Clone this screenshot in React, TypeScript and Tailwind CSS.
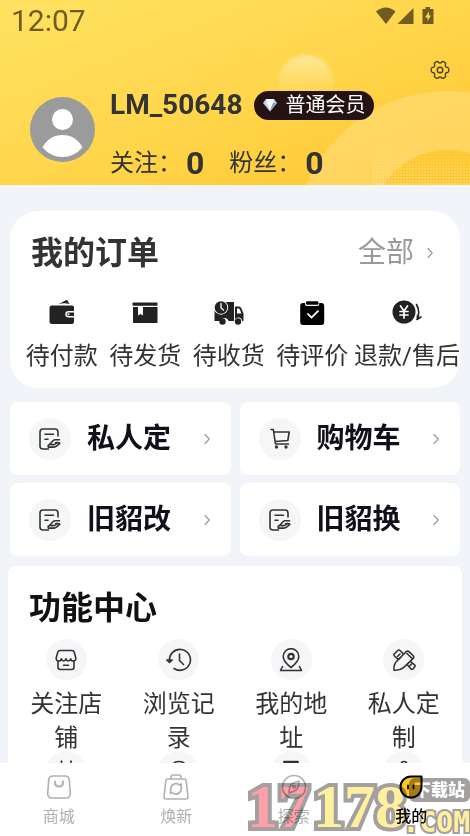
import type { ReactNode } from 'react'

type Item = { label: string; icon: ReactNode }

const stroke = {
  fill: 'none',
  stroke: 'currentColor',
  strokeWidth: 1.6,
  strokeLinecap: 'round' as const,
  strokeLinejoin: 'round' as const,
}

function Chevron() {
  return (
    <svg width="8" height="12" viewBox="0 0 8 12" {...stroke} strokeWidth={1.2}>
      <path d="M2 1.500 6.200 6 2 10.500" />
    </svg>
  )
}

function WalletIcon() {
  return (
    <svg width="28" height="28" viewBox="0 0 28 28" fill="#222">
      <path d="M10 5.500 17.800 1.300q1.200-.6 2 .6l1.700 3.100q-6-1.500-11.500.5z" />
      <path
        fillRule="evenodd"
        d="M4 6.500h20q2 0 2 2V12h-5.500a3 3 0 0 0 0 6.500H26V23q0 2-2 2H4q-2.500 0-2.500-2V8.500q0-2 2.500-2z"
      />
      <path d="M20.500 13.500H26V17h-5.500a1.700 1.700 0 0 1 0-3.500z" />
      <circle cx="20.500" cy="15.200" r="1" fill="#fff" />
    </svg>
  )
}

function BoxIcon() {
  return (
    <svg width="28" height="28" viewBox="0 0 28 28" fill="#222">
      <rect x="1.500" y="3.500" width="25" height="3.200" rx=".6" />
      <path d="M2 8h5v8.500l2.500-1.500 2.500 1.500V8h14.500v16H2z" />
    </svg>
  )
}

function TruckIcon() {
  return (
    <svg width="30" height="28" viewBox="0 0 30 28" fill="#222">
      <path d="M8 3h12v19h-5.500a4.200 4.200 0 0 0-8 0H.5V12z" />
      <path
        fillRule="evenodd"
        d="M21 7.500h4q1.500 0 2.200 1.500l2.300 5.500V22h-1.200a4 4 0 0 0-7.300-1.800zm2 2v5h4.500l-1.800-4.200q-.3-.8-1-.8z"
      />
      <circle cx="7" cy="8.500" r="7.200" fill="#fff" />
      <circle cx="7" cy="8.500" r="6.300" />
      <path d="M7 4.500V9l2.500 2" {...stroke} stroke="#fff" strokeWidth="1.300" />
      <circle cx="8.500" cy="22.500" r="3.200" />
      <circle cx="24" cy="22.500" r="3.200" />
    </svg>
  )
}

function ReviewIcon() {
  return (
    <svg width="28" height="28" viewBox="0 0 28 28">
      <path d="M7 4H5q-2.800 0-2.800 3v16q0 3 3 3h18q3 0 3-3V7q0-3-3-3h-2v1q0 2-2 2H9Q7 7 7 5z" />
      <rect x="8" y="2.300" width="12.500" height="3.500" rx="1.200" />
      <path d="m10 15 3.500 3.700 6.500-6.500" {...stroke} stroke="#fff" strokeWidth="1.800" />
    </svg>
  )
}

function RefundIcon() {
  return (
    <svg width="30" height="28" viewBox="0 0 30 28" fill="#222">
      <circle cx="12" cy="13" r="11.500" />
      <path d="m8.500 7 3.500 5 3.500-5M8 12.500h8M8 16h8M12 12.500V19" {...stroke} stroke="#fff" strokeWidth="1.700" />
      <path d="M24.500 5.500q3.800 6.500 1 14.500M25 20.500l4-2.500M25.200 20.500l.3-4" {...stroke} stroke="#222" />
    </svg>
  )
}

function DocHandIcon() {
  return (
    <svg width="22" height="22" viewBox="0 0 22 22" {...stroke}>
      <path d="M19 8V4q0-3-3-3H4Q1 1 1 4v14q0 3 3 3h5.500" />
      <path d="M6 6.200h8.500M6 11.200h3" />
      <path d="M20.500 11.800h-4.200q-1.300 0-2.300 1l-2.300 2.500q-.8 1.200.6 1.300h2.400q1.300 0 2-.8l1.500-1.400" />
      <path d="M20.800 15.500l-3.300 2.700q-1.200.9-2.500.9H9.200v-1.600l2-1.500M16.500 14.800h4" />
    </svg>
  )
}

function CartIcon() {
  return (
    <svg width="22" height="22" viewBox="0 0 22 22" {...stroke}>
      <path d="M2 1.500h2.300L6.500 16h13M5.500 4h14.700L18.800 12.500 6.200 13.500" />
      <circle cx="7.500" cy="19" r=".9" />
      <circle cx="17" cy="19" r=".9" />
    </svg>
  )
}

function ShopIcon() {
  return (
    <svg width="24" height="24" viewBox="0 0 24 24" {...stroke}>
      <path d="M6 2.500h12q1.800 0 2.200 1.600L21.800 10q.2 3-2.400 3-2.400 0-2.700-2.200-.7 2.200-2.400 2.200T12 10.800Q11.400 13 9.700 13t-2.400-2.200Q7 13 4.600 13 2 13 2.200 10l1.600-5.900Q4.200 2.500 6 2.500z" />
      <path d="M4 13.500V19q0 2.500 2.500 2.500h11q2.500 0 2.500-2.500v-5.500M9.500 17.300h5" />
    </svg>
  )
}

function HistoryIcon() {
  return (
    <svg width="26" height="24" viewBox="0 0 26 24" {...stroke}>
      <path d="M3.500 13A10.500 10.500 0 1 1 8 20.500M.8 12l2.700 2.500L6.200 12zM13.500 6v6.500l4 4" />
    </svg>
  )
}

function PinIcon() {
  return (
    <svg width="24" height="24" viewBox="0 0 24 24" {...stroke}>
      <path d="M12 19.500Q4.200 13.500 4.200 8.500a7.800 7.800 0 0 1 15.600 0Q19.800 13.500 12 19.500zM3.500 18.500l-2 4h21l-2-4" />
      <circle cx="12" cy="8.500" r="2.700" strokeWidth="2.200" />
    </svg>
  )
}

function DesignIcon() {
  return (
    <svg width="24" height="24" viewBox="0 0 24 24" {...stroke}>
      <path d="M2 22.200q-.5-5.700 2.500-8.700L14 3.800q1.600-1.500 3.200 0l3.800 3.700q1.500 1.600 0 3.200L11.500 19.700q-3.500 3-9.500 2.500zM15 5.500l4.500 4.500" />
      <path d="M8.500 9.500 6.200 11.500 2.500 8q-1-1 0-2.200L5.700 2.500q1.200-1 2.300 0L11.500 6M5.500 8.500 8 6M15.500 17l3.500 4q1 .9 2-.1l1.700-2.100q.8-1-.1-1.900L18.500 13.500M17.500 18l2.500-2.500" />
    </svg>
  )
}

function Gear() {
  return (
    <svg width="20" height="20" viewBox="0 0 20 20" {...stroke} strokeWidth={1.400}>
      <path d="M6.500 1.700q1.100-.5 1.900.5.700.8 1.600.8t1.600-.8q.8-1 1.900-.5l1.500.9q1 .8.500 2-.5 1 .1 1.900.6.800 1.700.9 1.300.2 1.400 1.500v2.100q-.1 1.300-1.400 1.500-1.100.1-1.700.9-.6.900-.1 1.900.5 1.200-.5 2l-1.500.9q-1.100.5-1.900-.5-.7-.8-1.600-.8t-1.600.8q-.8 1-1.900.5L5 17.300q-1-.8-.5-2 .5-1-.1-1.900-.6-.8-1.700-.9-1.300-.2-1.400-1.500V8.900q.1-1.300 1.400-1.500 1.100-.1 1.700-.9.600-.9.100-1.900-.5-1.200.5-2z" />
      <circle cx="10" cy="10" r="2.800" />
    </svg>
  )
}

const orders: Item[] = [
  { label: '待付款', icon: <WalletIcon /> },
  { label: '待发货', icon: <BoxIcon /> },
  { label: '待收货', icon: <TruckIcon /> },
  { label: '待评价', icon: <ReviewIcon /> },
  { label: '退款/售后', icon: <RefundIcon /> },
]

const shortcuts: Item[] = [
  { label: '私人定', icon: <DocHandIcon /> },
  { label: '购物车', icon: <CartIcon /> },
  { label: '旧貂改', icon: <DocHandIcon /> },
  { label: '旧貂换', icon: <DocHandIcon /> },
]

const features: Item[] = [
  { label: '关注店铺', icon: <ShopIcon /> },
  { label: '浏览记录', icon: <HistoryIcon /> },
  { label: '我的地址', icon: <PinIcon /> },
  { label: '私人定制', icon: <DesignIcon /> },
]

const moreFeatures: ReactNode[] = [
  <path d="M7.500 1v3M17 1v3M4 5h16v15H4z" />,
  <path d="M4 9Q5 1.500 12 1.500T20 9v4M4 9v4" />,
  <path d="M5 1.500h14v19H5zM5 2.500h14" />,
  <path d="M9 4.500a3 3 0 1 1 6 0 3 3 0 0 1-6 0zM5 20q0-8 7-8t7 8" />,
]

const tabs: (Item & { active?: boolean })[] = [
  {
    label: '商城',
    icon: (
      <svg width="28" height="28" viewBox="0 0 28 28" {...stroke}>
        <path d="M8 3h12q4 0 4.300 4l1 13q.2 5-4 5H6.700q-4.200 0-4-5l1-13Q4 3 8 3z" />
        <path d="M10 8.500v1q0 4 4 4t4-4v-1" strokeWidth="2" />
      </svg>
    ),
  },
  {
    label: '焕新',
    icon: (
      <svg width="28" height="28" viewBox="0 0 28 28" {...stroke}>
        <path d="M5.500 6h17q1.500 0 1.600 1.500L26 24q.1 2-2 2H4q-2.100 0-2-2L3.900 7.500Q4 6 5.500 6zM8.500 6l.8-3q.3-1 1.300-1h6.800q1 0 1.300 1l.8 3" />
        <path d="M8.700 18v-2.500a5.400 5.400 0 0 1 9-3.500M19.300 14v2a5.400 5.400 0 0 1-9 3.700M8.700 20.500V17M19.300 11v3.500" strokeWidth="1.800" />
      </svg>
    ),
  },
  {
    label: '探索',
    icon: (
      <svg width="28" height="28" viewBox="0 0 28 28" {...stroke}>
        <circle cx="14" cy="14" r="11.500" />
        <path d="M19 8q0 7-3.500 9.500L9 20q0-7 3.200-9.500z" />
        <circle cx="14" cy="14" r="1.300" />
      </svg>
    ),
  },
  {
    label: '我的',
    active: true,
    icon: (
      <svg width="28" height="28" viewBox="0 0 28 28" {...stroke}>
        <path d="M14 3.500h10.500V14A10.500 10.500 0 1 1 14 3.500z" fill="#ffc629" strokeWidth="2" />
        <path d="M11 12.500v3M16.500 12.500v3" strokeWidth="1.800" />
      </svg>
    ),
  },
]

function HeaderDecor() {
  return (
    <svg className="absolute right-0 bottom-0" width="220" height="185" viewBox="0 0 220 185">
      <defs>
        <linearGradient id="bubble" x1="0" y1="0" x2="0" y2="1">
          <stop offset="0" stopColor="#fff" stopOpacity=".42" />
          <stop offset=".75" stopColor="#fff" stopOpacity="0" />
        </linearGradient>
        <linearGradient id="fade" x1="0" y1="0" x2="0" y2="1">
          <stop offset="0" stopColor="#fff" stopOpacity="0" />
          <stop offset="1" stopColor="#fff" stopOpacity="1" />
        </linearGradient>
        <pattern id="dots" width="3" height="3" patternUnits="userSpaceOnUse">
          <rect width="2" height="2" fill="#ffe28a" fillOpacity=".6" />
        </pattern>
        <mask id="dotMask">
          <rect x="122" y="138" width="98" height="47" fill="url(#fade)" />
        </mask>
        <filter id="soft">
          <feGaussianBlur stdDeviation="1.500" />
        </filter>
      </defs>
      <circle cx="56" cy="83" r="28" fill="url(#bubble)" filter="url(#soft)" />
      <circle cx="198" cy="245" r="154" fill="#ffdf88" fillOpacity=".5" />
      <circle cx="198" cy="228" r="78" fill="#ffc830" />
      <rect x="122" y="138" width="98" height="47" fill="url(#dots)" mask="url(#dotMask)" />
    </svg>
  )
}

function StatusBar() {
  return (
    <div className="flex h-[42px] items-center justify-between pr-9 pl-[11px] text-[#6f5c20]">
      <span className="text-[30px] leading-[42px]">12:07</span>
      <svg width="58" height="18" viewBox="0 0 58 18" className="mb-[11px]" fill="currentColor">
        <path d="M0 4.500q10-8 19.500 0L10 17z" />
        <path d="M21.500 17 37.500 1v16z" />
        <path
          fillRule="evenodd"
          d="M49.500 0h4.500v2h3.500v15h-11V2h3zM53 4.500l-4 6h2.500V14l3.500-5.500h-2z"
        />
      </svg>
    </div>
  )
}

function Header() {
  return (
    <header className="relative shrink-0 overflow-hidden bg-linear-to-br from-[#ffe262] via-[#ffd64c] to-[#ffc62c] pb-1">
      <HeaderDecor />
      <div className="relative">
        <StatusBar />
        <div className="flex justify-end pt-[18px] pr-5">
          <button aria-label="设置" className="text-[#4a4224]">
            <Gear />
          </button>
        </div>
        <div className="mt-[10px] flex items-start pl-[30px]">
          <svg width="65" height="65" viewBox="0 0 65 65" className="mt-[7px] shrink-0">
            <circle cx="32.500" cy="32.500" r="32.500" fill="#9b9b9b" />
            <circle cx="32.500" cy="22.500" r="10.500" fill="#fff" />
            <path d="M12.500 50.500Q19 38 32.500 38t20 12.500Q44 60 32.500 60t-20-9.500z" fill="#fff" />
          </svg>
          <div className="ml-[15px] text-[#333]">
            <div className="flex h-[30px] items-center gap-3">
              <h1 className="text-[28px] leading-8 font-bold">LM_50648</h1>
              <span className="flex h-[29px] items-center gap-2 rounded-full bg-[#251313] px-[9px] text-[20px] leading-[29px] text-white">
                <svg width="14" height="14" viewBox="0 0 14 14">
                  <path d="M3 1h8l3 4-7 8.500L0 5z" fill="#c3d3e6" />
                  <path d="M3 1h8l-1 4H4z" fill="#f4f9ff" />
                  <path d="M4 5h6l-3 7z" fill="#fff" />
                  <path d="M10 5h4l-7 8.500z" fill="#8ea3bf" />
                </svg>
                普通会员
              </span>
            </div>
            <div className="mt-[25px] flex h-9 items-center text-[24px] leading-9">
              <span>关注：</span>
              <b className="ml-1 text-[32px]">0</b>
              <span className="ml-[25px]">粉丝：</span>
              <b className="ml-1 text-[32px]">0</b>
            </div>
          </div>
        </div>
      </div>
    </header>
  )
}

function Orders() {
  return (
    <section className="mx-[10px] mt-[26px] rounded-[28px] bg-white pt-[18px] pb-[14px] text-[#333]">
      <div className="flex h-12 items-center justify-between pr-[26px] pl-[21px]">
        <h2 className="text-[32px] leading-[48px] font-bold">我的订单</h2>
        <a href="#orders" className="flex items-center gap-3 text-[28px] leading-[42px] text-[#999]">
          全部
          <Chevron />
        </a>
      </div>
      <div className="mt-[22px] grid grid-cols-[repeat(4,1fr)_auto] pl-[10px]">
        {orders.map((o) => (
          <button key={o.label} className="flex flex-col items-center gap-[11px]">
            {o.icon}
            <span className="text-[24px] leading-9 whitespace-nowrap">{o.label}</span>
          </button>
        ))}
      </div>
    </section>
  )
}

function Shortcuts() {
  return (
    <div className="mx-[10px] mt-[14px] grid grid-cols-2 gap-x-[9px] gap-y-2">
      {shortcuts.map((s) => (
        <button key={s.label} className="flex h-[73px] items-center rounded-lg bg-white pr-5 pl-[19px]">
          <span className="flex size-[42px] shrink-0 items-center justify-center rounded-full bg-[#f5f6f8] text-[#333]">
            {s.icon}
          </span>
          <span className="ml-4 text-[28px] leading-[42px] font-bold text-[#10101a]">{s.label}</span>
          <span className="ml-auto text-[#999]">
            <Chevron />
          </span>
        </button>
      ))}
    </div>
  )
}

function Features() {
  return (
    <section className="mx-2 mt-[10px] rounded-lg bg-white px-[2px] pt-[18px] text-[#333]">
      <h2 className="pl-[19px] text-[32px] leading-[48px] font-bold text-[#111]">功能中心</h2>
      <div className="mt-[7px] grid grid-cols-4">
        {features.map((f) => (
          <button key={f.label} className="flex h-28 flex-col items-center px-3">
            <span className="flex size-[41px] shrink-0 items-center justify-center rounded-full bg-[#f5f6f8]">
              {f.icon}
            </span>
            <span className="mt-[7px] text-[24px] leading-[34px]">{f.label}</span>
          </button>
        ))}
        {moreFeatures.map((shape, i) => (
          <div key={i} className="flex justify-center">
            <span className="flex size-[41px] items-center justify-center rounded-full bg-[#f5f6f8]">
              <svg width="24" height="24" viewBox="0 0 24 24" {...stroke}>
                {shape}
              </svg>
            </span>
          </div>
        ))}
      </div>
    </section>
  )
}

function TabBar() {
  return (
    <nav className="relative grid h-[73px] shrink-0 grid-cols-4 bg-white">
      {tabs.map((t) => (
        <a
          key={t.label}
          href="#tab"
          className={
            t.active
              ? 'flex flex-col items-center pt-[10px] font-medium text-black'
              : 'flex flex-col items-center pt-[10px] text-[#b0b0b0]'
          }
        >
          {t.icon}
          <span className="mt-1 text-[16px] leading-6">{t.label}</span>
        </a>
      ))}
      <Stamp />
    </nav>
  )
}

// site mark laid over the right half of the tab bar
function Stamp() {
  return (
    <div className="pointer-events-none absolute right-0 bottom-0 h-[60px] w-[223px] mix-blend-multiply">
      <div className="absolute bottom-0 left-0 flex gap-1 font-['Liberation_Serif',serif] text-[62px] leading-[60px] font-bold [-webkit-text-stroke:8px_#a3a09f] [paint-order:stroke_fill]">
        <span className="text-[#ff9fa8]">17</span>
        <span className="text-[#fff0a0]">178</span>
      </div>
      <div className="absolute top-[2px] right-0 rounded-md bg-[#a3a09f] px-[5px] text-[17px] leading-[24px] font-black text-white">
        下载站
      </div>
      <div className="absolute right-0 bottom-0 font-['DejaVu_Sans_Mono',monospace] text-[28px] leading-[26px] font-bold text-[#fff0a0] [-webkit-text-stroke:4px_#a3a09f] [paint-order:stroke_fill]">
        .COM
      </div>
    </div>
  )
}

export default function App() {
  return (
    <div className="flex h-screen flex-col bg-[#f1f5f9] font-[Roboto,'Noto_Sans_CJK_SC',sans-serif]">
      <main className="min-h-0 flex-1 overflow-y-auto [scrollbar-width:none]">
        <Header />
        <Orders />
        <Shortcuts />
        <Features />
      </main>
      <TabBar />
    </div>
  )
}
